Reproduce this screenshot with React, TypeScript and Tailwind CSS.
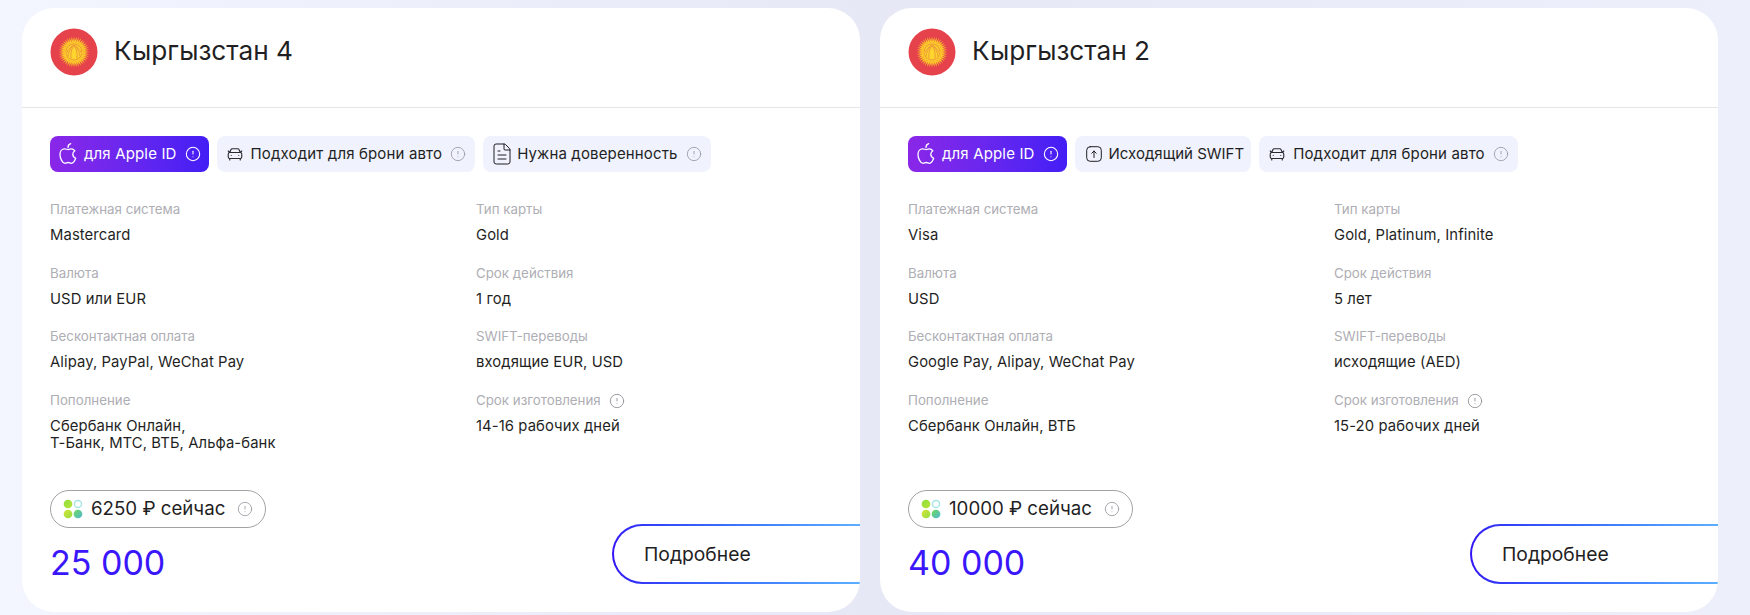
import React from "react";
import { CarFront, FileText, CircleAlert } from "lucide-react";

const font = { fontFamily: '"Inter", "Noto Sans", sans-serif' };

function Flag() {
  const rays = Array.from({ length: 40 }, (_, i) => (i * 360) / 40);
  return (
    <svg width="48" height="48" viewBox="0 0 48 48" className="shrink-0">
      <circle cx="24" cy="24" r="23.5" fill="#e5424b" />
      {rays.map((a) => (
        <path key={a} d="M22.900 14.500 L24 8.500 L25.100 14.500 Z" fill="#fbc92a" transform={`rotate(${a} 24 24)`} />
      ))}
      <circle cx="24" cy="24" r="10" fill="#fbc92a" />
      <circle cx="24" cy="24" r="8.400" fill="#ee9a35" />
      <circle cx="24" cy="24" r="7.600" fill="#fdd52e" />
      <path d="M17 24.500C19 20 22 17.500 24 17.500s5 2.500 7 7M21 30.500c-.5-4 0-9 3-13 3 4 3.500 9 3 13M18 28.500c0-3 2-7 4-10M30 28.500c0-3-2-7-4-10" fill="none" stroke="#e5803a" strokeWidth="0.700" />
    </svg>
  );
}

function Apple({ className }: { className?: string }) {
  return (
    <svg viewBox="0 0 20 22" fill="none" stroke="currentColor" strokeWidth="1.300" strokeLinecap="round" strokeLinejoin="round" className={className}>
      <path d="M10.200 6.600c-1.200 0-2-.8-3.700-.8C4 5.800 2 8 2 11.400c0 4 2.500 8.900 5 8.900 1.300 0 1.800-.8 3.200-.8s1.900.8 3.200.8c1.700 0 3.300-2.300 4.300-5-2-.9-2.900-2.300-2.900-4 0-1.500.8-2.700 2.100-3.500-1-1.300-2.400-1.900-3.800-1.900-1.600 0-2.700.7-2.900.7Z" />
      <path d="M10 4.500c0-1.800 1-3.300 2.700-3.800" />
    </svg>
  );
}

function UpBox() {
  return (
    <svg width="16" height="16" viewBox="0 0 16 16" fill="none" stroke="#1f1f24" strokeWidth="1" strokeLinecap="round" strokeLinejoin="round" className="ml-[2px] shrink-0">
      <rect x="0.700" y="0.700" width="14.600" height="14.600" rx="3.500" />
      <path d="M8 11.500V5M5.800 7.200 8 5l2.200 2.200" />
    </svg>
  );
}

function Coins() {
  return (
    <svg width="20" height="20" viewBox="0 0 22 22" className="shrink-0">
      <defs>
        <linearGradient id="cg1" x1="0" y1="0" x2="1" y2="1"><stop offset="0" stopColor="#8fe03c" /><stop offset="1" stopColor="#b7e33a" /></linearGradient>
        <linearGradient id="cg2" x1="0" y1="0" x2="1" y2="1"><stop offset="0" stopColor="#d6e536" /><stop offset="1" stopColor="#93dd43" /></linearGradient>
        <linearGradient id="cg3" x1="0" y1="0" x2="1" y2="1"><stop offset="0" stopColor="#6ddb55" /><stop offset="1" stopColor="#4fb8d8" /></linearGradient>
      </defs>
      <circle cx="5.500" cy="5.500" r="4.800" fill="url(#cg1)" />
      <circle cx="16.500" cy="5.500" r="3.900" fill="none" stroke="#a5e4e4" strokeWidth="1.500" />
      <circle cx="5.500" cy="16.500" r="4.800" fill="url(#cg2)" />
      <circle cx="16.500" cy="16.500" r="4.800" fill="url(#cg3)" />
    </svg>
  );
}

function Tag({ icon, text, info = true, primary = false }: { icon: React.ReactNode; text: string; info?: boolean; primary?: boolean }) {
  return (
    <div className={primary
      ? "flex h-9 items-center gap-[6px] rounded-lg bg-gradient-to-r from-[#8a26e8] to-[#431df5] px-[8px] text-white"
      : "flex h-9 items-center gap-[7px] rounded-lg bg-[#f0f3fd] px-[9px] text-[#1f1f24]"}>
      {icon}
      <span className={info ? "whitespace-nowrap text-[15px] tracking-[0.15px]" : "-mr-[2px] whitespace-nowrap text-[15px] tracking-[0px]"}>{text}</span>
      {info && <CircleAlert size={16} strokeWidth={primary ? 1.600 : 1.300} className={primary ? "ml-[2px] text-white" : "ml-[1px] text-[#9a9aa2]"} />}
    </div>
  );
}

function Field({ label, value, hint, className }: { label: string; value: React.ReactNode; hint?: boolean; className?: string }) {
  return (
    <div className={className}>
      <div className="flex h-[20px] items-center gap-2 text-[13.300px] text-[#aeaeb4]">
        {label}
        {hint && <CircleAlert size={16} strokeWidth={1.300} className="text-[#8f8f96]" />}
      </div>
      <div className="mt-[7px] text-[14.800px] leading-[17px] tracking-[0.1px] text-[#1f1f24]">{value}</div>
    </div>
  );
}

type CardProps = {
  title: string;
  tags: React.ReactNode;
  left: [string, React.ReactNode][];
  right: [string, React.ReactNode, boolean?][];
  now: string;
  price: string;
};

function Card({ title, tags, left, right, now, price }: CardProps) {
  return (
    <div className="flex h-[604px] w-[838px] shrink-0 flex-col overflow-hidden rounded-[32px] bg-white">
      <div className="flex h-[100px] shrink-0 items-start gap-4 border-b border-[#e6e6ea] pl-[28px] pt-[20px]">
        <Flag />
        <div className="pt-[4px] text-[26.200px] leading-[38px] text-[#1f1f24]">{title}</div>
      </div>
      <div className="flex gap-2 pl-[28px] pt-[28px]">{tags}</div>
      <div className="grid grid-cols-[426px_1fr] pl-[28px] pt-[28px]">
        <div className="flex flex-col gap-[19.600px]">
          {left.map(([l, v]) => <Field key={l} label={l} value={v} />)}
        </div>
        <div className="flex flex-col gap-[19.600px]">
          {right.map(([l, v, h]) => <Field key={l} label={l} value={v} hint={h} />)}
        </div>
      </div>
      <div className="relative mt-auto h-[122px] pl-[28px]">
        <div className="inline-flex h-[38px] items-center rounded-full border border-[#a2a2a5] pl-[12px] pr-[12px]">
          <Coins />
          <span className="ml-[8px] whitespace-nowrap text-[18.700px] text-[#1f1f24]">{now}</span>
          <CircleAlert size={16} strokeWidth={1.300} className="ml-[12px] text-[#9a9aa2]" />
        </div>
        <div className="mt-[13px] text-[34px] leading-[44px] text-[#3a16fb]">{price}</div>
        <div className="absolute left-[590px] top-[34px] h-[60px] w-[300px] rounded-full bg-gradient-to-r from-[#3414f6] to-[#5dafff] to-[83%] p-[2px]">
          <div className="flex h-full items-center rounded-full bg-white pl-[30px] pt-[1px] text-[19.300px] text-[#1f1f24]">Подробнее</div>
        </div>
      </div>
    </div>
  );
}

const apple = <Apple className="h-[22px] w-5 shrink-0" />;
const car = <CarFront size={18} strokeWidth={1.500} className="shrink-0 text-[#2a2a30]" />;
const doc = <FileText size={24} strokeWidth={1} className="-ml-[2px] -mr-[4px] shrink-0 text-[#1f1f24]" />;

export default function App() {
  return (
    <div style={font} className="flex h-[615px] w-[1750px] gap-[20px] overflow-hidden bg-gradient-to-r from-[#f3f5ff] via-[#e6e8f6] to-[#edeffb] pl-[22px] pt-[8px]">
      <Card
        title="Кыргызстан 4"
        tags={<>
          <Tag primary icon={apple} text="для Apple ID" />
          <Tag icon={car} text="Подходит для брони авто" />
          <Tag icon={doc} text="Нужна доверенность" />
        </>}
        left={[
          ["Платежная система", "Mastercard"],
          ["Валюта", "USD или EUR"],
          ["Бесконтактная оплата", "Alipay, PayPal, WeChat Pay"],
          ["Пополнение", <>Сбербанк Онлайн,<br />Т-Банк, МТС, ВТБ, Альфа-банк</>],
        ]}
        right={[
          ["Тип карты", "Gold"],
          ["Срок действия", "1 год"],
          ["SWIFT-переводы", "входящие EUR, USD"],
          ["Срок изготовления", "14-16 рабочих дней", true],
        ]}
        now="6250 ₽ сейчас"
        price="25 000"
      />
      <Card
        title="Кыргызстан 2"
        tags={<>
          <Tag primary icon={apple} text="для Apple ID" />
          <Tag icon={<UpBox />} text="Исходящий SWIFT" info={false} />
          <Tag icon={car} text="Подходит для брони авто" />
        </>}
        left={[
          ["Платежная система", "Visa"],
          ["Валюта", "USD"],
          ["Бесконтактная оплата", "Google Pay, Alipay, WeChat Pay"],
          ["Пополнение", "Сбербанк Онлайн, ВТБ"],
        ]}
        right={[
          ["Тип карты", "Gold, Platinum, Infinite"],
          ["Срок действия", "5 лет"],
          ["SWIFT-переводы", "исходящие (AED)"],
          ["Срок изготовления", "15-20 рабочих дней", true],
        ]}
        now="10000 ₽ сейчас"
        price="40 000"
      />
    </div>
  );
}
